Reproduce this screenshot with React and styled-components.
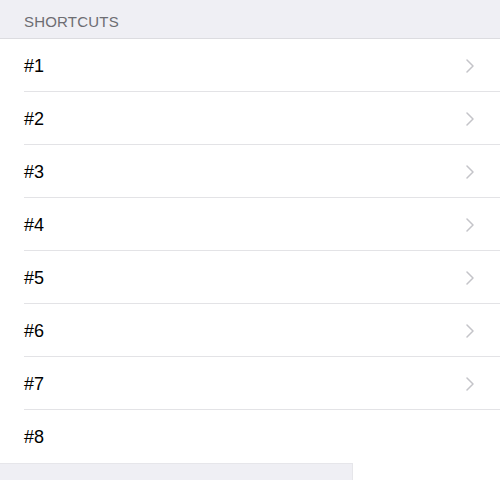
import React from "react";
import styled, { createGlobalStyle } from "styled-components";

const Global = createGlobalStyle`
  html, body { margin: 0; padding: 0; background: #ffffff; }
  body { font-family: "Liberation Sans", Arial, sans-serif; -webkit-font-smoothing: antialiased; }
`;

const Page = styled.div`
  width: 500px;
  height: 480px;
  overflow: hidden;
  display: flex;
  flex-direction: column;
  background: #ffffff;
`;

const SectionHeader = styled.div`
  height: 39px;
  box-sizing: border-box;
  padding: 13px 24px 0;
  background: #efeff4;
  border-bottom: 1px solid #dcdce0;
  color: #6d6d72;
  font-size: 15px;
  line-height: 17px;
  letter-spacing: 0.2px;
  text-transform: uppercase;
  flex-shrink: 0;
`;

const List = styled.div`
  display: flex;
  flex-direction: column;
  padding-left: 24px;
  flex-shrink: 0;
`;

const Row = styled.div`
  height: 53px;
  box-sizing: border-box;
  display: flex;
  align-items: center;
  justify-content: space-between;
  padding-right: 26px;
  border-bottom: ${(p) => (p.$last ? "none" : "1px solid #e3e3e6")};
  color: #000;
  font-size: 18px;
`;

const Label = styled.span`
  padding-top: 2px;
`;

const Chevron = styled.svg`
  width: 8px;
  height: 14px;
  display: block;
  margin-top: 1px;
`;

const Footer = styled.div`
  width: 352px;
  flex: 1;
  background: #efeff4;
  border-top: 1px solid #e6e6ea;
  border-right: 1px solid #e6e6ea;
`;

const items = ["#1", "#2", "#3", "#4", "#5", "#6", "#7", "#8"];

export default function App() {
  return (
    <Page>
      <Global />
      <SectionHeader>Shortcuts</SectionHeader>
      <List>
        {items.map((t, i) => {
          const last = i === items.length - 1;
          return (
            <Row key={t} $last={last}>
              <Label>{t}</Label>
              {!last && (
                <Chevron viewBox="0 0 8 14">
                  <path d="M1 1 L7 7 L1 13" fill="none" stroke="#c4c4c9" strokeWidth="1.5" strokeLinecap="round" strokeLinejoin="round" />
                </Chevron>
              )}
            </Row>
          );
        })}
      </List>
      <Footer />
    </Page>
  );
}
